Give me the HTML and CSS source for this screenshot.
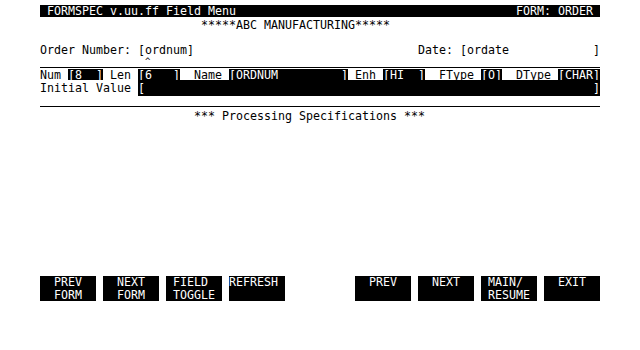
FILE: index.html
```html
<!DOCTYPE html>
<html>
<head>
<meta charset="utf-8">
<link rel="stylesheet" href="styles.css">
</head>
<body>
<div class="screen">
  <div class="titlebar"><span><span class="cursor">_</span>FORMSPEC v.uu.ff Field Menu</span><span>FORM: ORDER </span></div>
  <div class="row banner">                       *****ABC MANUFACTURING*****</div>
  <div class="row blank"></div>
  <div class="row">Order Number: [ordnum]                                Date: [ordate            ]</div>
  <div class="caret-row"><span class="caret">^</span></div>
  <div class="num-row"><span>Num </span><span class="inv">[8  ]</span><span> Len </span><span class="inv">[6   ]</span><span>  Name </span><span class="inv">[ORDNUM         ]</span><span> Enh </span><span class="inv">[HI  ]</span><span>  FType </span><span class="inv">[O]</span><span>  DType </span><span class="inv">[CHAR]</span></div>
  <div class="init-row"><span>Initial Value </span><span class="inv">[                                                                ]</span></div>
  <div class="rule-row"></div>
  <div class="row heading">                      *** Processing Specifications ***</div>
  <div class="spacer"></div>
  <div class="softkeys">
    <div class="group">
      <div class="key">  PREV  
  FORM  </div>
      <div class="key">  NEXT  
  FORM  </div>
      <div class="key"> FIELD  
 TOGGLE </div>
      <div class="key">REFRESH </div>
    </div>
    <div class="group">
      <div class="key">  PREV  </div>
      <div class="key">  NEXT  </div>
      <div class="key"> MAIN/  
 RESUME </div>
      <div class="key">  EXIT  </div>
    </div>
  </div>
</div>
</body>
</html>
```

FILE: styles.css
```css
html, body {
  margin: 0;
  padding: 0;
  background: #fff;
}
body {
  font-family: "DejaVu Sans Mono", "Liberation Mono", monospace;
  font-size: 11.63px;
  line-height: 13px;
  color: #000;
}
.screen {
  width: 560px;
  padding: 5px 0 0 40px;
}
.titlebar {
  display: flex;
  justify-content: space-between;
  background: #000;
  color: #fff;
  height: 12px;
  line-height: 12px;
  white-space: pre;
}
.cursor {
  color: #fff;
}
.row {
  height: 12px;
  line-height: 12px;
  padding-top: 1px;
  white-space: pre;
}
.banner {
  height: 11px;
  padding-top: 2px;
}
.blank {
  height: 12px;
}
.caret-row {
  height: 11px;
  border-bottom: 1px solid #000;
}
.caret {
  display: block;
  padding-left: 105px;
  font-size: 9px;
  line-height: 11px;
}
.num-row {
  display: flex;
  padding-top: 1px;
}
.num-row span {
  height: 11px;
  line-height: 12px;
  white-space: pre;
}
.init-row {
  display: flex;
}
.init-row span {
  height: 16px;
  line-height: 16px;
  white-space: pre;
}
.inv {
  background: #000;
  color: #fff;
}
.rule-row {
  height: 10px;
  border-bottom: 1px solid #000;
}
.heading {
  height: 13px;
  padding-top: 3px;
}
.spacer {
  height: 153px;
}
.softkeys {
  display: flex;
  gap: 14px;
}
.group {
  display: flex;
  gap: 7px;
}
.group + .group {
  margin-left: 56px;
}
.key {
  width: 56px;
  height: 25px;
  background: #000;
  color: #fff;
  white-space: pre;
  line-height: 13px;
}
```
